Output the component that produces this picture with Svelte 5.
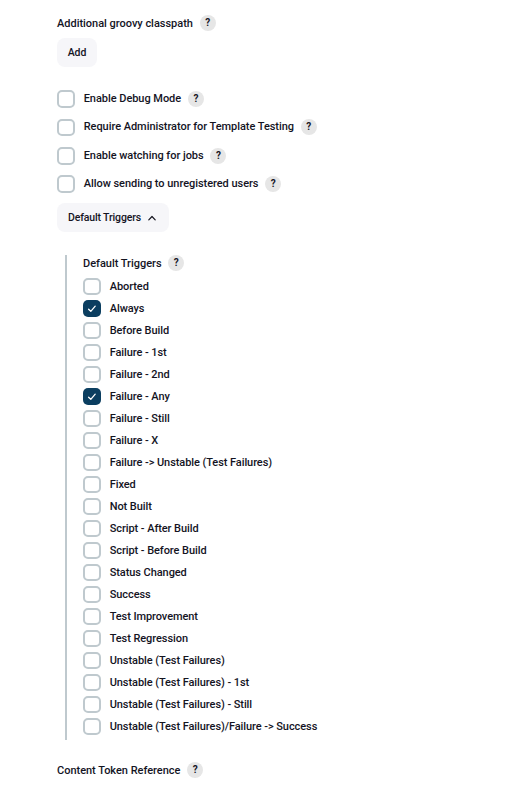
<script>
  const options = [
    'Enable Debug Mode',
    'Require Administrator for Template Testing',
    'Enable watching for jobs',
    'Allow sending to unregistered users',
  ];
  const triggers = [
    'Aborted', 'Always', 'Before Build', 'Failure - 1st', 'Failure - 2nd', 'Failure - Any',
    'Failure - Still', 'Failure - X', 'Failure -> Unstable (Test Failures)', 'Fixed', 'Not Built',
    'Script - After Build', 'Script - Before Build', 'Status Changed', 'Success', 'Test Improvement',
    'Test Regression', 'Unstable (Test Failures)', 'Unstable (Test Failures) - 1st',
    'Unstable (Test Failures) - Still', 'Unstable (Test Failures)/Failure -> Success',
  ];
  let checked = $state(['Always', 'Failure - Any']);
  const toggle = (name) => {
    checked = checked.includes(name) ? checked.filter((n) => n !== name) : [...checked, name];
  };
</script>

{#snippet help()}
  <span class="help">?</span>
{/snippet}

{#snippet option(name)}
  <button class="check" role="checkbox" aria-checked={checked.includes(name)} onclick={() => toggle(name)}>
    <span class="box" class:on={checked.includes(name)}>
      {#if checked.includes(name)}
        <svg width="18" height="17" viewBox="0 0 18 17"><path d="M5.6 9.2 L7.8 11.3 L12.2 6.2" /></svg>
      {/if}
    </span>
    <span>{name}</span>
  </button>
{/snippet}

<main>
  <div class="title"><span>Additional groovy classpath</span>{@render help()}</div>
  <button class="btn add">Add</button>
  <div class="options">
    {#each options as name}
      <div class="option">{@render option(name)}{@render help()}</div>
    {/each}
  </div>
  <button class="btn more">
    <span>Default Triggers</span>
    <svg width="8" height="6" viewBox="0 0 8 6"><path d="M0.8 4.8 L4 1.5 L7.2 4.8" /></svg>
  </button>
  <section>
    <div class="title"><span>Default Triggers</span>{@render help()}</div>
    {#each triggers as name}
      <div class="trigger">{@render option(name)}</div>
    {/each}
  </section>
  <div class="title"><span>Content Token Reference</span>{@render help()}</div>
</main>

<style>
  :global(body) { margin: 0; background: #fff; }
  main {
    box-sizing: border-box;
    height: 798px;
    padding: 15px 0 0 57px;
    overflow: hidden;
    color: #14141f;
    font: 500 11px/16px Roboto, sans-serif;
    letter-spacing: -0.075px;
  }
  button {
    padding: 0;
    border: 0;
    background: none;
    color: inherit;
    font: inherit;
    letter-spacing: inherit;
    white-space: nowrap;
  }
  .title, .option { display: flex; align-items: center; gap: 6.8px; white-space: nowrap; }
  .title { height: 16px; align-items: flex-start; letter-spacing: -0.02px; }
  .title > span:first-child { padding-top: 1px; }
  .option { letter-spacing: -0.045px; }
  .help {
    width: 16px;
    height: 16px;
    border-radius: 50%;
    background: #e6e6e6;
    font-weight: 700;
    font-size: 10px;
    letter-spacing: 0;
    text-align: center;
  }
  .btn {
    display: flex;
    align-items: center;
    height: 29px;
    border-radius: 8px;
    background: #f6f6f9;
    font-size: 10.5px;
    letter-spacing: -0.14px;
  }
  .add { width: 40px; justify-content: center; margin-top: 7px; }
  .options { margin-top: 17.8px; }
  .option { height: 28.4px; }
  .check { display: flex; align-items: center; gap: 8.7px; }
  .box {
    box-sizing: border-box;
    width: 18px;
    height: 17.5px;
    flex: none;
    border: 2px solid #bfc9ce;
    border-radius: 5px;
  }
  .trigger .box { height: 17px; }
  .box.on { border: 0; background: #0b3e60; }
  .box svg { display: block; }
  svg path { fill: none; stroke: #fff; stroke-width: 1.3; stroke-linecap: round; stroke-linejoin: round; }
  .more { width: 112px; margin-top: 4.7px; padding-left: 11px; gap: 6.7px; }
  .more span { padding-top: 1px; }
  .more path { stroke: #14141f; stroke-width: 1.2; }
  section {
    box-sizing: border-box;
    height: 485px;
    margin: 23px 0 22.2px 8px;
    padding-left: 16px;
    border-left: 2px solid #bfc9ce;
  }
  section .title { margin-bottom: 4.5px; }
  .trigger { display: flex; align-items: center; height: 22px; }
</style>
